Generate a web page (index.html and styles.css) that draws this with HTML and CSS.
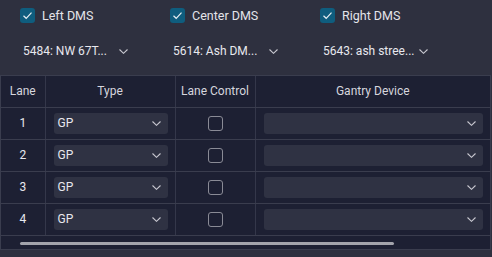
FILE: index.html
```html
<!DOCTYPE html>
<html>
<head>
<meta charset="utf-8">
<link rel="stylesheet" href="styles.css">
</head>
<body>
<div class="top">
  <div class="col">
    <label class="chk"><span class="box"><svg viewBox="0 0 15 15" width="15" height="15"><path d="M3.5 7.8 L6.2 10.3 L11.5 4.6" fill="none" stroke="#e6eef2" stroke-width="1.2"/></svg></span>Left DMS</label>
    <div class="dd"><span>5484: NW 67T...</span><svg class="chev" viewBox="0 0 9 5" width="9" height="5"><path d="M0.5 0.5 L4.5 4.3 L8.5 0.5" fill="none" stroke="#c8c8d0" stroke-width="1.1"/></svg></div>
  </div>
  <div class="col">
    <label class="chk"><span class="box"><svg viewBox="0 0 15 15" width="15" height="15"><path d="M3.5 7.8 L6.2 10.3 L11.5 4.6" fill="none" stroke="#e6eef2" stroke-width="1.2"/></svg></span>Center DMS</label>
    <div class="dd"><span>5614: Ash DM...</span><svg class="chev" viewBox="0 0 9 5" width="9" height="5"><path d="M0.5 0.5 L4.5 4.3 L8.5 0.5" fill="none" stroke="#c8c8d0" stroke-width="1.1"/></svg></div>
  </div>
  <div class="col">
    <label class="chk"><span class="box"><svg viewBox="0 0 15 15" width="15" height="15"><path d="M3.5 7.8 L6.2 10.3 L11.5 4.6" fill="none" stroke="#e6eef2" stroke-width="1.2"/></svg></span>Right DMS</label>
    <div class="dd"><span>5643: ash stree...</span><svg class="chev" viewBox="0 0 9 5" width="9" height="5"><path d="M0.5 0.5 L4.5 4.3 L8.5 0.5" fill="none" stroke="#c8c8d0" stroke-width="1.1"/></svg></div>
  </div>
</div>
<div class="grid-wrap">
  <table class="grid">
    <colgroup><col class="c1"><col class="c2"><col class="c3"><col class="c4"></colgroup>
    <thead>
      <tr><th>Lane</th><th>Type</th><th>Lane Control</th><th>Gantry Device</th></tr>
    </thead>
    <tbody>
      <tr><td>1</td><td><div class="sel type"><span>GP</span><svg class="chev" viewBox="0 0 9 5" width="9" height="5"><path d="M0.5 0.5 L4.5 4.3 L8.5 0.5" fill="none" stroke="#c8c8d0" stroke-width="1.1"/></svg></div></td><td><span class="cb"></span></td><td><div class="sel gantry"><span></span><svg class="chev" viewBox="0 0 9 5" width="9" height="5"><path d="M0.5 0.5 L4.5 4.3 L8.5 0.5" fill="none" stroke="#c8c8d0" stroke-width="1.1"/></svg></div></td></tr>
      <tr><td>2</td><td><div class="sel type"><span>GP</span><svg class="chev" viewBox="0 0 9 5" width="9" height="5"><path d="M0.5 0.5 L4.5 4.3 L8.5 0.5" fill="none" stroke="#c8c8d0" stroke-width="1.1"/></svg></div></td><td><span class="cb"></span></td><td><div class="sel gantry"><span></span><svg class="chev" viewBox="0 0 9 5" width="9" height="5"><path d="M0.5 0.5 L4.5 4.3 L8.5 0.5" fill="none" stroke="#c8c8d0" stroke-width="1.1"/></svg></div></td></tr>
      <tr><td>3</td><td><div class="sel type"><span>GP</span><svg class="chev" viewBox="0 0 9 5" width="9" height="5"><path d="M0.5 0.5 L4.5 4.3 L8.5 0.5" fill="none" stroke="#c8c8d0" stroke-width="1.1"/></svg></div></td><td><span class="cb"></span></td><td><div class="sel gantry"><span></span><svg class="chev" viewBox="0 0 9 5" width="9" height="5"><path d="M0.5 0.5 L4.5 4.3 L8.5 0.5" fill="none" stroke="#c8c8d0" stroke-width="1.1"/></svg></div></td></tr>
      <tr><td>4</td><td><div class="sel type"><span>GP</span><svg class="chev" viewBox="0 0 9 5" width="9" height="5"><path d="M0.5 0.5 L4.5 4.3 L8.5 0.5" fill="none" stroke="#c8c8d0" stroke-width="1.1"/></svg></div></td><td><span class="cb"></span></td><td><div class="sel gantry"><span></span><svg class="chev" viewBox="0 0 9 5" width="9" height="5"><path d="M0.5 0.5 L4.5 4.3 L8.5 0.5" fill="none" stroke="#c8c8d0" stroke-width="1.1"/></svg></div></td></tr>
    </tbody>
  </table>
  <div class="scroll"><div class="thumb"></div></div>
</div>
</body>
</html>
```
FILE: styles.css
```css
* { box-sizing: border-box; }
html, body { margin: 0; padding: 0; }
body {
  background: #2e303f;
  font-family: Roboto, "Noto Sans", sans-serif;
  font-size: 12px;
  color: #e4e4ea;
  width: 492px;
  height: 257px;
  overflow: hidden;
}
.top {
  display: flex;
  padding: 8px 0 0 20px;
  height: 75px;
}
.col {
  width: 150px;
  display: flex;
  flex-direction: column;
}
.chk {
  display: flex;
  align-items: center;
  height: 15px;
  gap: 7px;
  font-size: 12.5px;
}
.box {
  width: 15px;
  height: 15px;
  border-radius: 3px;
  background: #0f5d7e;
  display: block;
}
.box svg { display: block; }
.dd {
  margin-top: 20px;
  width: 108px;
  height: 16px;
  display: flex;
  align-items: center;
  justify-content: space-between;
  padding-left: 3px;
  font-size: 12px;
  color: #e8e8ee;
}
.chev { display: block; flex: none; }
.grid-wrap {
  width: 491px;
  height: 175px;
  background: #1d2033;
  border: 1px solid #3a3d4e;
}
.grid {
  border-collapse: collapse;
  width: 489px;
  table-layout: fixed;
}
.c1 { width: 44px; }
.c2 { width: 130px; }
.c3 { width: 80px; }
.c4 { width: 235px; }
.grid th {
  height: 31px;
  font-weight: normal;
  color: #d6d6de;
  font-size: 12px;
  border-right: 1px solid #34374a;
  border-bottom: 1px solid #3a3d4e;
  padding: 0;
  text-align: center;
}
.grid td {
  height: 32px;
  border-right: 1px solid #34374a;
  border-bottom: 1px solid #3a3d4e;
  padding: 0;
  text-align: center;
  font-size: 12px;
  color: #e8e8ee;
}
.grid th:last-child, .grid td:last-child { border-right: none; }
.sel {
  height: 21px;
  border-radius: 3px;
  background: #2f3243;
  display: flex;
  align-items: center;
  justify-content: space-between;
  padding: 0 7px 0 4px;
  text-align: left;
}
.type { margin-left: 8px; width: 114px; }
.gantry { margin-left: 8px; width: 219px; }
.cb {
  display: inline-block;
  width: 15px;
  height: 15px;
  border: 1px solid #8a8b96;
  border-radius: 3px;
  vertical-align: middle;
}
.scroll {
  height: 14px;
  padding: 6px 0 0 19px;
}
.thumb {
  width: 374px;
  height: 3px;
  border-radius: 2px;
  background: #a3a4ac;
}
```
